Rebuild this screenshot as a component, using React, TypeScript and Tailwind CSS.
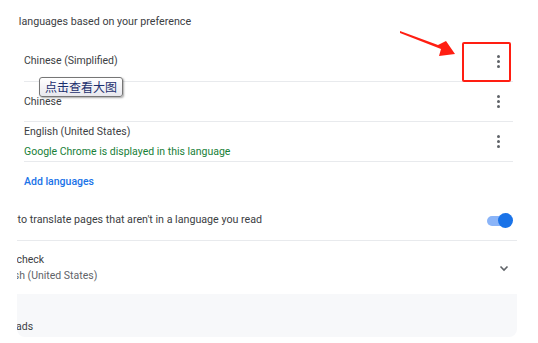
import React from 'react'

const languages = [
  { name: 'Chinese (Simplified)' },
  { name: 'Chinese' },
  { name: 'English (United States)', note: 'Google Chrome is displayed in this language' },
]

function Kebab() {
  return (
    <div className="flex w-[20px] flex-col items-center gap-[2px]">
      <span className="h-[3px] w-[3px] rounded-full bg-[#5f6368]" />
      <span className="h-[3px] w-[3px] rounded-full bg-[#5f6368]" />
      <span className="h-[3px] w-[3px] rounded-full bg-[#5f6368]" />
    </div>
  )
}

export default function App() {
  return (
    <div className="relative h-[343px] w-[538px] overflow-hidden bg-white font-['Roboto',sans-serif] text-[10.5px] text-[#3c4043]">
      <div className="ml-[17px] w-[500px] overflow-hidden">
        <div className="flex h-[41px] items-center whitespace-nowrap pt-[3px]">
          <span className="ml-[-27px] text-[10.7px] text-[#3c4043]">Order languages based on your preference</span>
        </div>

        <div className="ml-[7px] mr-[4px]">
          {languages.map((lang, i) => (
            <div
              key={lang.name}
              className={`flex h-[40px] items-center justify-between pr-[5px] ${i > 0 ? 'border-t border-[#e8eaed]' : ''}`}
            >
              <div className="flex flex-col leading-[20px]">
                <span>{lang.name}</span>
                {lang.note && <span className="text-[#188038]">{lang.note}</span>}
              </div>
              <Kebab />
            </div>
          ))}
          <div className="flex h-[40px] items-center border-t border-[#e8eaed]">
            <span className="font-medium text-[#1a73e8]">Add languages</span>
          </div>
        </div>

        <div className="flex h-[39px] items-center justify-between whitespace-nowrap pr-[4px]">
          <span className="ml-[-26px] text-[10.7px]">Offer to translate pages that aren't in a language you read</span>
          <div className="relative flex h-[16px] w-[26px] items-center">
            <div className="h-[10px] w-[24px] rounded-full bg-[#8ab4f8]" />
            <div className="absolute right-0 h-[15px] w-[15px] rounded-full bg-[#1a73e8]" />
          </div>
        </div>

        <div className="flex h-[54px] items-center justify-between border-t border-[#e8eaed] pr-[4px] shadow-[0_1px_1px_rgba(0,0,0,0.28)]">
          <div className="ml-[-26px] flex flex-col whitespace-nowrap leading-[16px]">
            <span>Spell check</span>
            <span className="text-[#5f6368]">English (United States)</span>
          </div>
          <svg width="16" height="16" viewBox="0 0 16 16" className="mr-[1px]">
            <path d="M4.5 6.5 L8 10 L11.5 6.5" fill="none" stroke="#5f6368" strokeWidth="1.6" />
          </svg>
        </div>

        <div className="flex h-[43px] items-end rounded-b-lg bg-[#f7f8fa] pb-[2px] whitespace-nowrap">
          <span className="ml-[-36px]">Downloads</span>
        </div>
      </div>

      {/* annotation overlays */}
      <div className="absolute left-[462px] top-[42px] h-[40px] w-[49px] rounded-[2px] border-2 border-[#ff1e12]" />
      <svg className="absolute left-0 top-0" width="538" height="343">
        <polygon points="400,31 438,45 446,41 455,54 439,56 441,49 400,33" fill="#ff1e12" />
      </svg>
      <div className="absolute left-[39px] top-[77px] flex h-[20px] w-[84px] items-center justify-center rounded-[3px] border border-[#767676] bg-gradient-to-b from-white to-[#e8e8ee] font-['Noto_Sans_CJK_SC',sans-serif] text-[12px] text-[#1c2f6e] shadow-[1px_1px_2px_rgba(0,0,0,0.35)]">
        点击查看大图
      </div>
    </div>
  )
}
